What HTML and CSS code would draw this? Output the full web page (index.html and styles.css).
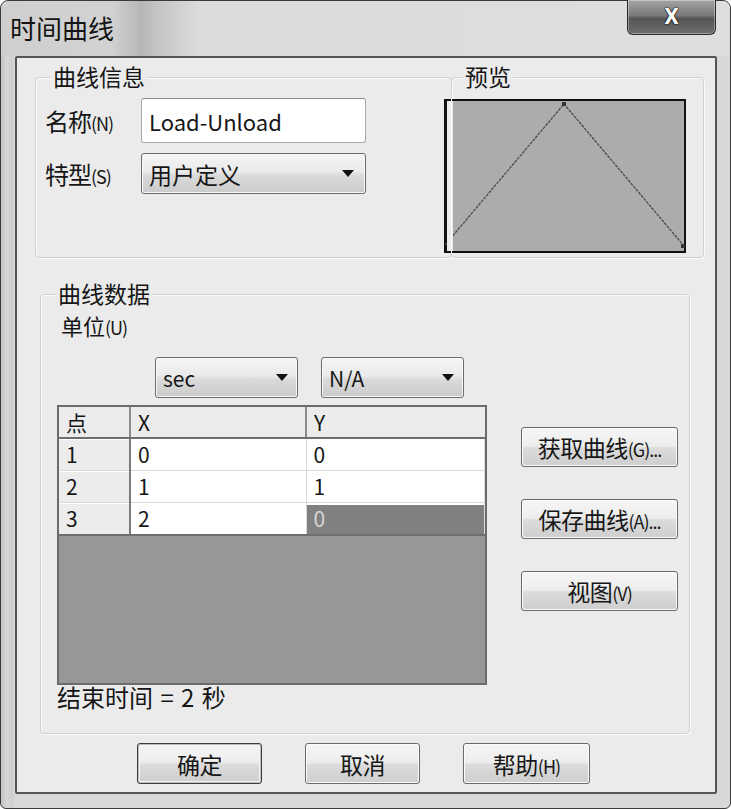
FILE: index.html
```html
<!DOCTYPE html>
<html lang="zh-CN">
<head>
  <meta charset="UTF-8">
  <title>时间曲线</title>
  <link rel="stylesheet" href="styles.css">
</head>
<body>
  <div class="window">
    <div class="titlebar">
      <span class="title">时间曲线</span>
      <button class="close-btn">X</button>
    </div>

    <div class="client">
      <div class="top-row">
        <div class="group info-group">
          <span class="group-title">曲线信息</span>
          <label class="field-label">名称<small>(N)</small></label>
          <div class="textbox">Load-Unload</div>
          <label class="field-label">特型<small>(S)</small></label>
          <div class="combo combo-type">用户定义<span class="arrow"></span></div>
        </div>
        <div class="group preview-group">
          <span class="group-title">预览</span>
          <!-- curve preview: x 0,1,2 / y 0,1,0 -->
          <svg class="preview" width="242" height="154" viewBox="0 0 242 154">
            <rect x="0" y="0" width="242" height="154" fill="#111"/>
            <rect x="9" y="2" width="231" height="150" fill="#acacac"/>
            <polyline points="1,146 120,5 240,147" fill="none" stroke="#4a4a4a" stroke-width="1.3" stroke-dasharray="3 1"/>
            <rect x="118" y="3" width="4" height="4" fill="#333"/>
            <rect x="237" y="145" width="4" height="4" fill="#333"/>
            <rect x="3" y="2" width="6" height="150" fill="#ebebeb"/>
            <rect x="7" y="0" width="1" height="154" fill="#fafafa"/>
            <rect x="0" y="0" width="4" height="2" fill="#111"/>
            <rect x="0" y="152" width="4" height="2" fill="#111"/>
          </svg>
        </div>
      </div>

      <div class="group data-group">
        <span class="group-title">曲线数据</span>
        <div class="unit-label">单位<small>(U)</small></div>
        <div class="unit-row">
          <div class="combo combo-unit">sec<span class="arrow"></span></div>
          <div class="combo combo-unit">N/A<span class="arrow"></span></div>
        </div>
        <div class="data-body">
          <div class="grid">
            <table>
              <thead>
                <tr><th class="col-pt">点</th><th class="col-x">X</th><th class="col-y">Y</th></tr>
              </thead>
              <tbody>
                <tr><td class="row-head">1</td><td>0</td><td>0</td></tr>
                <tr><td class="row-head">2</td><td>1</td><td>1</td></tr>
                <tr><td class="row-head">3</td><td>2</td><td class="selected">0</td></tr>
              </tbody>
            </table>
          </div>
          <div class="side-buttons">
            <button class="btn">获取曲线<small>(G)...</small></button>
            <button class="btn">保存曲线<small>(A)...</small></button>
            <button class="btn">视图<small>(V)</small></button>
          </div>
        </div>
        <div class="end-time">结束时间 = 2 秒</div>
      </div>

      <div class="dialog-buttons">
        <button class="btn btn-default">确定</button>
        <button class="btn btn-cancel">取消</button>
        <button class="btn btn-help">帮助<small>(H)</small></button>
      </div>
    </div>
  </div>
</body>
</html>
```

FILE: styles.css
```css
body { margin:0; font-family:"Noto Sans CJK SC","Noto Sans",sans-serif; color:#161616; background:#fff; }
small { font-size:0.8em; }

/* window frame */
.window { box-sizing:border-box; width:731px; height:809px; display:flex; flex-direction:column; padding:0 13px 14px 14px; background:linear-gradient(90deg,#c4c4c4 0,#d6d6d6 6px,#cfcfcf 11px,#d8d8d8 14px,#d8d8d8 100%); border:1px solid #3a3a3a; border-radius:8px 8px 6px 6px; }
.titlebar { display:flex; justify-content:space-between; align-items:flex-start; height:55px; margin:0 -13px 0 -14px; padding-left:9px; background:linear-gradient(90deg,#cfcfcf 0,#d2d2d2 110px,#b7b7b7 140px,#c6c6c6 158px,#dcdcdc 200px,#dedede 100%); border-radius:8px 8px 0 0; }
.title { font-size:26px; line-height:30px; padding-top:12px; color:#141414; }
.close-btn { width:89px; height:35px; margin:-1px 14px 0 0; padding:0; border:1px solid #2a2a2a; border-top:none; border-radius:0 0 6px 6px; background:linear-gradient(#a4a4a4,#7a7a7a 45%,#555 55%,#6e6e6e); box-shadow:inset 0 0 0 1px rgba(255,255,255,0.35); color:#fff; font:bold 21px "DejaVu Sans Condensed","DejaVu Sans",sans-serif; text-shadow:0 0 2px #000,0 0 1px #000; }

.client { flex:1; display:flex; flex-direction:column; padding:19px 10px 0 18px; background:#ebebeb; border:2px solid #555; border-radius:2px; }

/* group boxes */
.group { position:relative; box-sizing:border-box; border:1px solid #d0d0d0; border-radius:4px; box-shadow:inset 1px 1px 0 #fbfbfb, 1px 1px 0 #fbfbfb; }
.group-title { position:absolute; top:-13px; left:15px; padding:0 2px; font-size:23px; line-height:23px; background:#ebebeb; }

.top-row { display:flex; }
.info-group { width:417px; height:181px; display:grid; grid-template-columns:96px 225px; grid-template-rows:45px 41px; row-gap:10px; align-items:center; align-content:start; padding:20px 0 0 9px; }
.field-label { font-size:24px; letter-spacing:-1px; }
.field-label small, .unit-label small { font-size:18px; letter-spacing:-1px; }
.textbox { box-sizing:border-box; height:45px; display:flex; align-items:center; padding:0 7px; background:#fff; border:1px solid #a8a8a8; border-top-color:#8c8c8c; border-radius:3px; font-size:22px; }

.preview-group { width:253px; height:181px; margin-left:-1px; padding-top:21px; }
.preview-group .group-title { left:11px; }
.preview { display:block; margin-left:-8px; }

/* combos */
.combo { box-sizing:border-box; height:41px; display:flex; align-items:center; justify-content:space-between; padding:0 11px 0 7px; border:1px solid #6c6c6c; border-radius:3px; background:linear-gradient(#f5f5f5,#eaeaea 45%,#dadada 55%,#cbcbcb); box-shadow:inset 0 0 0 1px #f8f8f8; font-size:23px; }
.arrow { width:0; height:0; border-left:6px solid transparent; border-right:6px solid transparent; border-top:7px solid #111; }

/* data group */
.data-group { width:650px; height:440px; margin:36px 0 0 5px; padding:18px 0 0 16px; }
.unit-label { margin-left:4px; font-size:22px; line-height:24px; }
.unit-row { display:flex; gap:23px; margin:18px 0 0 98px; }
.combo-unit { width:143px; padding-right:9px; font-size:21px; }
.data-body { display:flex; margin-top:7px; }

.grid { box-sizing:border-box; width:430px; height:280px; background:#979797; border:2px solid #6b6b6b; }
.grid table { width:100%; border-collapse:collapse; table-layout:fixed; font-size:21px; }
.grid th, .grid td { padding:0 7px; text-align:left; font-weight:400; line-height:1; }
.grid th { height:30px; background:#ececec; border-bottom:2px solid #6e6e6e; border-right:2px solid #8a8a8a; }
.grid th:last-child { border-right:none; }
.col-pt { width:56px; }
.col-x { width:160px; }
.grid td { height:31px; background:#fff; border-bottom:1px solid #dadada; border-right:1px solid #dadada; }
.grid td.row-head { background:#ececec; border-right:2px solid #7a7a7a; box-shadow:inset 0 1px 0 #fff; }
.grid tbody tr:last-child td { border-bottom:2px solid #6e6e6e; }
.grid td.selected { background:#808080; color:#d6d6d6; box-shadow:inset 0 2px 0 #fff; }

.side-buttons { display:flex; flex-direction:column; gap:32px; margin:22px 0 0 34px; }
.side-buttons .btn { width:157px; height:40px; }
.end-time { font-size:24px; line-height:26px; margin-top:-1px; word-spacing:2px; }

/* buttons */
.btn { box-sizing:border-box; padding:0; border:1px solid #6a6a6a; border-radius:3px; background:linear-gradient(#f6f6f6,#ececec 48%,#dcdcdc 52%,#cecece); box-shadow:inset 0 0 0 1px #fbfbfb; font-family:inherit; font-size:23px; color:#161616; letter-spacing:-0.5px; }
.btn small { font-size:18px; letter-spacing:-1px; }
.dialog-buttons { display:flex; gap:43px; margin:9px 0 0 102px; }
.dialog-buttons .btn { height:41px; }
.btn-default { width:125px; border-color:#3e3e3e; box-shadow:inset 0 0 0 1px #bdbdbd, inset 0 0 0 2px #f4f4f4; }
.btn-cancel { width:115px; }
.btn-help { width:127px; }
```
